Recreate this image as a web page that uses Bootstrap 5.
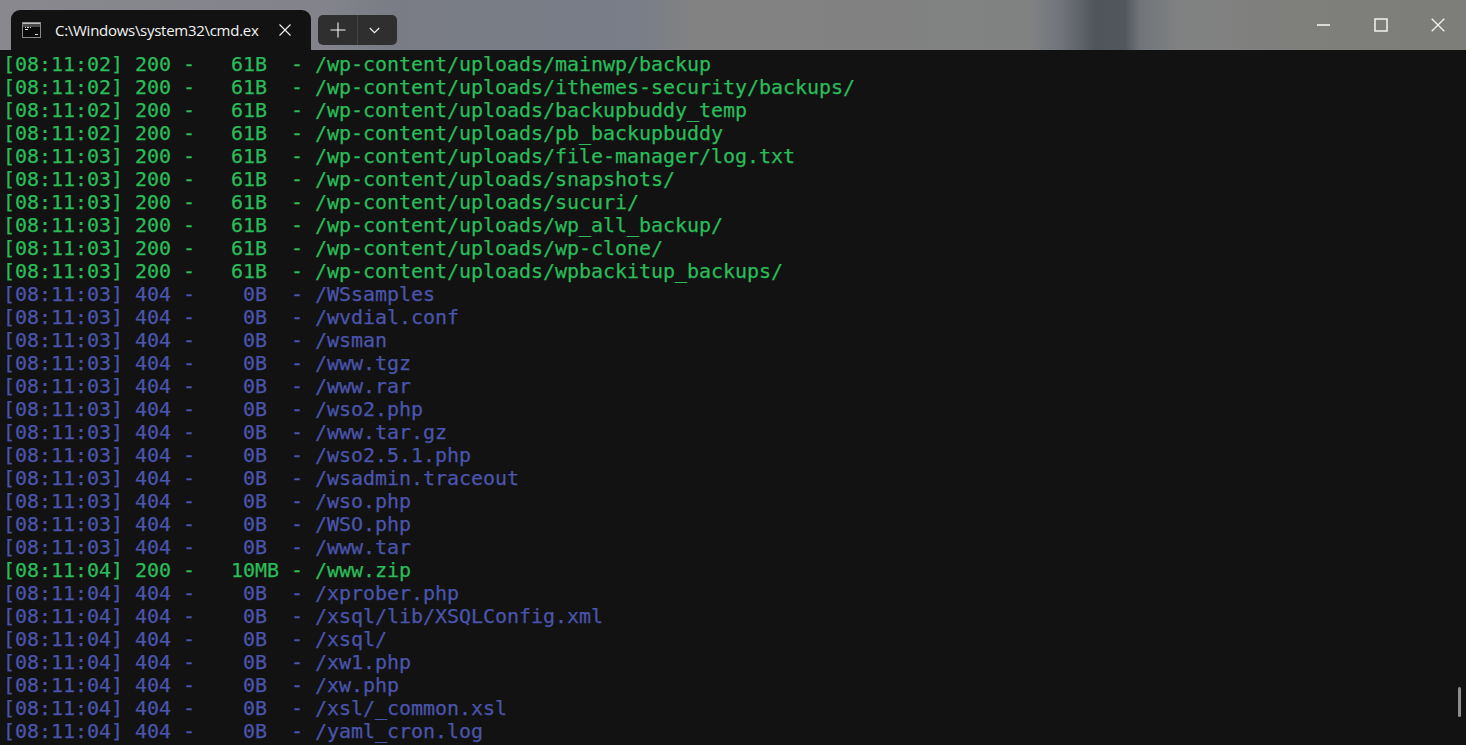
<!DOCTYPE html>
<html lang="en">
<head>
<meta charset="utf-8">
<title>cmd</title>
<link href="https://cdn.jsdelivr.net/npm/bootstrap@5.3.0/dist/css/bootstrap.min.css" rel="stylesheet">
<style>
html,body{height:100%;overflow:hidden;background:#0c0c0c}
.win-bar{height:50px;background:linear-gradient(90deg,#88888e 0,#83848b 320px,#797c85 400px,#7a7e88 640px,#7e8084 670px,#828282 700px,#818181 880px,#808282 1030px,#70747a 1062px,#50555c 1095px,#52575d 1125px,#71757a 1140px,#808282 1180px,#7f7f7c 1300px,#7d7d7a 1466px)}
.tab-shape{width:300px;height:40px;margin-left:11px;background:#121212;border-radius:9px 9px 0 0;padding:0 20px 0 11px;color:#f2f2f2}
.tab-title{white-space:nowrap;font:15px "Open Sans","Noto Sans",sans-serif;margin-left:14px;letter-spacing:-.28px}
.tab-btns{width:79px;height:30px;margin-left:7px;margin-bottom:5px;background:#2f2f2f;border-radius:5px}
.tab-btns>div{height:30px}
.plus-cell{width:40px;border-right:1px solid #434343}
.chev-cell{padding-right:6px}
.caps{margin-left:auto}
.cap-cell{width:57px;height:50px}
.term{height:695px;background:#121212;position:relative;padding:3px 0 0 3px;font:20px/23px "DejaVu Sans Mono",monospace;letter-spacing:-.04px;overflow:hidden;-webkit-text-stroke:.25px currentColor}
.term-line{white-space:pre;height:23px}
.ok{color:#2abd59}
.miss{color:#4a55ad}
.thumb{position:absolute;right:5px;top:637px;width:3px;height:30px;background:#8d8d8d;border-radius:2px}
svg{display:block}
</style>
</head>
<body>
<div class="win-bar d-flex align-items-end">
  <div class="tab-shape d-flex align-items-center">
    <svg width="19" height="16" viewBox="0 0 19 16"><rect x=".5" y=".5" width="18" height="15" fill="#0b0b0b" stroke="#8a8a8a"/><rect x="1" y="1" width="17" height="4" fill="#4a4a4a"/><rect x="1" y="1" width="17" height="1" fill="#bdbdbd"/><path d="M3 5h1v1H3zM5 5h2v1H5zM8 5h1v1H8zM3 7h3v1H3zM13 12h3v1h-3z" fill="#ddd"/></svg>
    <div class="tab-title">C:\Windows\system32\cmd.ex</div>
    <svg class="ms-auto" width="12" height="12" viewBox="0 0 12 12"><path d="M.5.5l11 11M11.500.5l-11 11" stroke="#f2f2f2" stroke-width="1.100" fill="none"/></svg>
  </div>
  <div class="tab-btns d-flex overflow-hidden">
    <div class="plus-cell d-flex align-items-center justify-content-center"><svg width="16" height="16" viewBox="0 0 16 16"><path d="M8 .5v15M.5 8h15" stroke="#f5f5f5" stroke-width="1.100" fill="none"/></svg></div>
    <div class="chev-cell flex-grow-1 d-flex align-items-center justify-content-center"><svg width="11" height="7" viewBox="0 0 11 7"><path d="M.8 1l4.700 4.700L10.200 1" stroke="#eee" stroke-width="1.200" fill="none"/></svg></div>
  </div>
  <div class="caps d-flex align-self-stretch">
    <div class="cap-cell d-flex align-items-center justify-content-center"><svg width="14" height="14" viewBox="0 0 14 14"><path d="M0 7h13" stroke="#f2f2f2" stroke-width="1.600"/></svg></div>
    <div class="cap-cell d-flex align-items-center justify-content-center"><svg width="14" height="14" viewBox="0 0 14 14"><rect x="1" y="1" width="12" height="12" stroke="#f2f2f2" stroke-width="1.500" fill="none"/></svg></div>
    <div class="cap-cell d-flex align-items-center justify-content-center"><svg width="14" height="14" viewBox="0 0 14 14"><path d="M.7.7l12.600 12.600M13.300.7L.7 13.300" stroke="#f2f2f2" stroke-width="1.300" fill="none"/></svg></div>
  </div>
</div>
<div class="term">
<div class="term-line ok">[08:11:02] 200 -   61B  - /wp-content/uploads/mainwp/backup</div>
<div class="term-line ok">[08:11:02] 200 -   61B  - /wp-content/uploads/ithemes-security/backups/</div>
<div class="term-line ok">[08:11:02] 200 -   61B  - /wp-content/uploads/backupbuddy_temp</div>
<div class="term-line ok">[08:11:02] 200 -   61B  - /wp-content/uploads/pb_backupbuddy</div>
<div class="term-line ok">[08:11:03] 200 -   61B  - /wp-content/uploads/file-manager/log.txt</div>
<div class="term-line ok">[08:11:03] 200 -   61B  - /wp-content/uploads/snapshots/</div>
<div class="term-line ok">[08:11:03] 200 -   61B  - /wp-content/uploads/sucuri/</div>
<div class="term-line ok">[08:11:03] 200 -   61B  - /wp-content/uploads/wp_all_backup/</div>
<div class="term-line ok">[08:11:03] 200 -   61B  - /wp-content/uploads/wp-clone/</div>
<div class="term-line ok">[08:11:03] 200 -   61B  - /wp-content/uploads/wpbackitup_backups/</div>
<div class="term-line miss">[08:11:03] 404 -    0B  - /WSsamples</div>
<div class="term-line miss">[08:11:03] 404 -    0B  - /wvdial.conf</div>
<div class="term-line miss">[08:11:03] 404 -    0B  - /wsman</div>
<div class="term-line miss">[08:11:03] 404 -    0B  - /www.tgz</div>
<div class="term-line miss">[08:11:03] 404 -    0B  - /www.rar</div>
<div class="term-line miss">[08:11:03] 404 -    0B  - /wso2.php</div>
<div class="term-line miss">[08:11:03] 404 -    0B  - /www.tar.gz</div>
<div class="term-line miss">[08:11:03] 404 -    0B  - /wso2.5.1.php</div>
<div class="term-line miss">[08:11:03] 404 -    0B  - /wsadmin.traceout</div>
<div class="term-line miss">[08:11:03] 404 -    0B  - /wso.php</div>
<div class="term-line miss">[08:11:03] 404 -    0B  - /WSO.php</div>
<div class="term-line miss">[08:11:03] 404 -    0B  - /www.tar</div>
<div class="term-line ok">[08:11:04] 200 -   10MB - /www.zip</div>
<div class="term-line miss">[08:11:04] 404 -    0B  - /xprober.php</div>
<div class="term-line miss">[08:11:04] 404 -    0B  - /xsql/lib/XSQLConfig.xml</div>
<div class="term-line miss">[08:11:04] 404 -    0B  - /xsql/</div>
<div class="term-line miss">[08:11:04] 404 -    0B  - /xw1.php</div>
<div class="term-line miss">[08:11:04] 404 -    0B  - /xw.php</div>
<div class="term-line miss">[08:11:04] 404 -    0B  - /xsl/_common.xsl</div>
<div class="term-line miss">[08:11:04] 404 -    0B  - /yaml_cron.log</div>
<div class="thumb"></div>
</div>
<script src="https://cdn.jsdelivr.net/npm/bootstrap@5.3.0/dist/js/bootstrap.bundle.min.js"></script>
</body>
</html>
